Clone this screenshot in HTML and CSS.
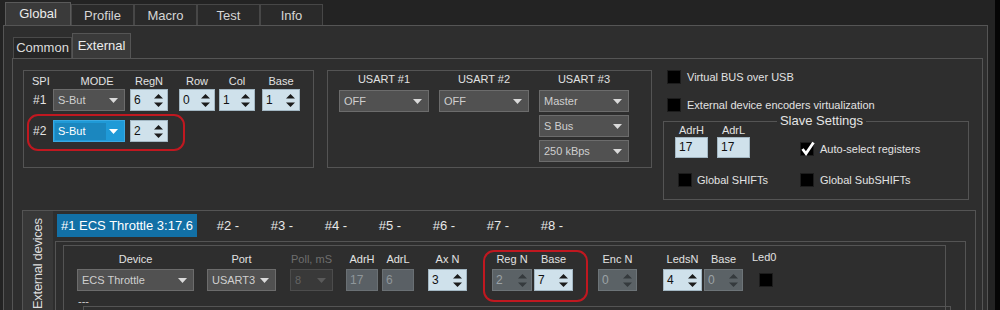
FILE: index.html
```html
<!DOCTYPE html>
<html>
<head>
<meta charset="utf-8">
<title>Global / External</title>
<link rel="stylesheet" href="styles.css">
</head>
<body>
<div class="app">
    <div class="tabs">
        <div class="tab active">Global</div>
        <div class="tab">Profile</div>
        <div class="tab">Macro</div>
        <div class="tab">Test</div>
        <div class="tab">Info</div>
    </div>
    <div class="panel">
        <div class="subtabs">
            <div class="subtab">Common</div>
            <div class="subtab active">External</div>
        </div>
        <div class="subpanel">
            <div class="toprow">
                <div class="boxes">
                    <div class="box spi">
                        <div class="spi-row head">
                            <div class="c-num">SPI</div>
                            <div class="c-mode">MODE</div>
                            <div class="c-reg">RegN</div>
                            <div class="c-row">Row</div>
                            <div class="c-col">Col</div>
                            <div class="c-base">Base</div>
                        </div>
                        <div class="spi-row">
                            <div class="c-num">#1</div>
                            <div class="combo c-mode"><span>S-But</span><svg class="dd" width="9" height="5" viewBox="0 0 9 5"><path d="M0 0h9L4.5 5z"/></svg></div>
                            <div class="spin c-reg"><span>6</span><svg width="9" height="13" viewBox="0 0 9 13"><path d="M0 4.5L4.5 0 9 4.5zM0 8.5h9L4.5 13z"/></svg></div>
                            <div class="spin c-row"><span>0</span><svg width="9" height="13" viewBox="0 0 9 13"><path d="M0 4.5L4.5 0 9 4.5zM0 8.5h9L4.5 13z"/></svg></div>
                            <div class="spin c-col"><span>1</span><svg width="9" height="13" viewBox="0 0 9 13"><path d="M0 4.5L4.5 0 9 4.5zM0 8.5h9L4.5 13z"/></svg></div>
                            <div class="spin c-base"><span>1</span><svg width="9" height="13" viewBox="0 0 9 13"><path d="M0 4.5L4.5 0 9 4.5zM0 8.5h9L4.5 13z"/></svg></div>
                        </div>
                        <div class="spi-row second marked">
                            <div class="c-num">#2</div>
                            <div class="combo blue c-mode"><span class="sel">S-But</span><svg class="dd" width="9" height="5" viewBox="0 0 9 5"><path d="M0 0h9L4.5 5z"/></svg></div>
                            <div class="spin c-reg last"><span>2</span><svg width="9" height="13" viewBox="0 0 9 13"><path d="M0 4.5L4.5 0 9 4.5zM0 8.5h9L4.5 13z"/></svg></div>
                        </div>
                    </div>
                    <div class="box usart">
                        <div class="u-label">USART #1</div>
                        <div class="u-label">USART #2</div>
                        <div class="u-label">USART #3</div>
                        <div class="combo"><span>OFF</span><svg width="9" height="5" viewBox="0 0 9 5"><path d="M0 0h9L4.5 5z"/></svg></div>
                        <div class="combo"><span>OFF</span><svg width="9" height="5" viewBox="0 0 9 5"><path d="M0 0h9L4.5 5z"/></svg></div>
                        <div class="combo"><span>Master</span><svg width="9" height="5" viewBox="0 0 9 5"><path d="M0 0h9L4.5 5z"/></svg></div>
                        <div class="combo u-third"><span>S Bus</span><svg width="9" height="5" viewBox="0 0 9 5"><path d="M0 0h9L4.5 5z"/></svg></div>
                        <div class="combo u-third"><span>250 kBps</span><svg width="9" height="5" viewBox="0 0 9 5"><path d="M0 0h9L4.5 5z"/></svg></div>
                    </div>
                </div>
                <div class="side">
                    <div class="check-row"><div class="chk"></div><span>Virtual BUS over USB</span></div>
                    <div class="check-row second"><div class="chk"></div><span>External device encoders virtualization</span></div>
                    <div class="slave">
                        <div class="slave-title">Slave Settings</div>
                        <div class="slave-grid">
                            <div class="adr">
                                <div class="field narrow">
                                    <div class="f-label">AdrH</div>
                                    <div class="edit">17</div>
                                </div>
                                <div class="field narrow">
                                    <div class="f-label">AdrL</div>
                                    <div class="edit">17</div>
                                </div>
                            </div>
                            <div class="check-row auto">
                                <div class="chk"><svg width="15" height="15" viewBox="0 0 15 15"><path d="M2.5 8L6 12.5 13.5 1.5"/></svg></div>
                                <span>Auto-select registers</span>
                            </div>
                            <div class="check-row shifts"><div class="chk"></div><span>Global SHIFTs</span></div>
                            <div class="check-row subshifts"><div class="chk"></div><span>Global SubSHIFTs</span></div>
                        </div>
                    </div>
                </div>
            </div>

            <div class="devbox">
                <div class="vtab">External devices</div>
                <div class="devmain">
                    <div class="devtabs">
                        <div class="dtab active">#1 ECS Throttle 3:17.6</div>
                        <div class="dtab">#2 -</div>
                        <div class="dtab">#3 -</div>
                        <div class="dtab">#4 -</div>
                        <div class="dtab">#5 -</div>
                        <div class="dtab">#6 -</div>
                        <div class="dtab">#7 -</div>
                        <div class="dtab">#8 -</div>
                    </div>
                    <div class="devpage">
                        <div class="group">
                            <div class="fields">
                                <div class="field w-device">
                                    <div class="f-label">Device</div>
                                    <div class="combo"><span>ECS Throttle</span><svg width="9" height="5" viewBox="0 0 9 5"><path d="M0 0h9L4.5 5z"/></svg></div>
                                </div>
                                <div class="field w-port">
                                    <div class="f-label">Port</div>
                                    <div class="combo"><span>USART3</span><svg width="9" height="5" viewBox="0 0 9 5"><path d="M0 0h9L4.5 5z"/></svg></div>
                                </div>
                                <div class="field w-poll">
                                    <div class="f-label off">Poll, mS</div>
                                    <div class="combo dis"><span>8</span><svg width="9" height="5" viewBox="0 0 9 5"><path d="M0 0h9L4.5 5z"/></svg></div>
                                </div>
                                <div class="field w-adrh">
                                    <div class="f-label">AdrH</div>
                                    <div class="edit dis">17</div>
                                </div>
                                <div class="field w-adrl">
                                    <div class="f-label">AdrL</div>
                                    <div class="edit dis">6</div>
                                </div>
                                <div class="field w-axn">
                                    <div class="f-label">Ax N</div>
                                    <div class="spin"><span>3</span><svg width="9" height="13" viewBox="0 0 9 13"><path d="M0 4.5L4.5 0 9 4.5zM0 8.5h9L4.5 13z"/></svg></div>
                                </div>
                                <div class="pair marked">
                                    <div class="field w-regn">
                                        <div class="f-label">Reg N</div>
                                        <div class="spin dis"><span>2</span><svg width="9" height="13" viewBox="0 0 9 13"><path d="M0 4.5L4.5 0 9 4.5zM0 8.5h9L4.5 13z"/></svg></div>
                                    </div>
                                    <div class="field w-base">
                                        <div class="f-label">Base</div>
                                        <div class="spin"><span>7</span><svg width="9" height="13" viewBox="0 0 9 13"><path d="M0 4.5L4.5 0 9 4.5zM0 8.5h9L4.5 13z"/></svg></div>
                                    </div>
                                </div>
                                <div class="field w-encn">
                                    <div class="f-label">Enc N</div>
                                    <div class="spin dis"><span>0</span><svg width="9" height="13" viewBox="0 0 9 13"><path d="M0 4.5L4.5 0 9 4.5zM0 8.5h9L4.5 13z"/></svg></div>
                                </div>
                                <div class="field w-leds">
                                    <div class="f-label">LedsN</div>
                                    <div class="spin"><span>4</span><svg width="9" height="13" viewBox="0 0 9 13"><path d="M0 4.5L4.5 0 9 4.5zM0 8.5h9L4.5 13z"/></svg></div>
                                </div>
                                <div class="field w-lbase">
                                    <div class="f-label">Base</div>
                                    <div class="spin dis"><span>0</span><svg width="9" height="13" viewBox="0 0 9 13"><path d="M0 4.5L4.5 0 9 4.5zM0 8.5h9L4.5 13z"/></svg></div>
                                </div>
                                <div class="field w-led0">
                                    <div class="f-label led0">Led0</div>
                                    <div class="chk led"></div>
                                </div>
                            </div>
                            <div class="dash">---</div>
                            <div class="subbox"></div>
                        </div>
                    </div>
                </div>
            </div>
        </div>
    </div>
</div>
</body>
</html>
```

FILE: styles.css
```css
html, body {
    margin: 0;
    background: #050505;
}
body {
    font-family: "Liberation Sans", Arial, sans-serif;
    font-size: 11px;
    color: #e2e2e2;
}
.app {
    width: 995px;
    height: 310px;
    overflow: hidden;
    background: #232323;
}

/* main tabs */
.tabs {
    display: flex;
    align-items: flex-end;
    height: 25px;
    padding-left: 5px;
}
.tab {
    width: 63px;
    height: 21px;
    box-sizing: border-box;
    border: 1px solid #474747;
    border-bottom: none;
    background: #2a2a2a;
    color: #d6d6d6;
    font-size: 13px;
    line-height: 21px;
    text-align: center;
}
.tab.active {
    width: 66px;
    height: 23px;
    line-height: 21px;
    border-color: #5a5a5a;
    background: #3a3a3a;
    color: #ececec;
}

.panel {
    margin-left: 3px;
    width: 985px;
    height: 300px;
    box-sizing: border-box;
    border: 1px solid #555;
    background: #2e2e2e;
    padding: 7px 0 0 8px;
}

/* sub tabs */
.subtabs {
    display: flex;
    align-items: flex-end;
    height: 25px;
    padding-left: 1px;
}
.subtab {
    width: 59px;
    height: 21px;
    box-sizing: border-box;
    border: 1px solid #4a4a4a;
    border-bottom: none;
    background: #262626;
    color: #dcdcdc;
    font-size: 13px;
    line-height: 20px;
    text-align: center;
}
.subtab.active {
    height: 25px;
    line-height: 24px;
    background: #3a3a3a;
    border-color: #555;
    color: #ececec;
}

.subpanel {
    width: 971px;
    height: 270px;
    box-sizing: border-box;
    border: 1px solid #555;
    border-bottom: none;
    padding: 11px 0 0 10px;
}

.toprow {
    display: flex;
    align-items: flex-start;
}
.boxes {
    display: flex;
    align-items: stretch;
    margin-right: 11px;
}
.box {
    box-sizing: border-box;
    border: 1px solid #545454;
}

/* SPI */
.spi {
    width: 291px;
    padding-top: 2px;
    margin-right: 13px;
}
.spi-row {
    display: flex;
    align-items: center;
}
.spi-row.head {
    height: 16px;
    line-height: 16px;
}
.spi-row.head > div {
    text-align: center;
}
.spi-row.second {
    margin-top: 9px;
}
.c-num {
    width: 29px;
    padding-left: 9px;
    box-sizing: border-box;
    font-size: 12px;
}
.spi-row.head .c-num {
    text-align: left;
    padding-left: 8px;
    font-size: 11px;
}
.c-mode { width: 72px; margin-right: 5px; box-sizing: border-box; }
.spi-row.head .c-mode { padding-left: 16px; }
.c-reg { width: 38px; margin-right: 11px; }
.c-reg.last { margin-right: 0; }
.c-row { width: 36px; margin-right: 4px; }
.c-col { width: 36px; margin-right: 7px; }
.c-base { width: 38px; }

/* red annotation rings */
.marked {
    position: relative;
    width: max-content;
}
.marked::after {
    content: "";
    position: absolute;
    border: 2px solid #c01820;
    border-radius: 11px;
}
.spi-row.marked::after {
    top: -6px;
    left: 3px;
    right: -17px;
    bottom: -9px;
}
.pair.marked::after {
    top: -1px;
    left: -9px;
    right: -15px;
    bottom: -11px;
}

/* USART */
.usart {
    width: 325px;
    display: grid;
    grid-template-columns: 90px 90px 90px;
    column-gap: 10px;
    row-gap: 3px;
    padding: 1px 0 5px 11px;
    align-content: start;
}
.u-label {
    line-height: 15px;
    text-align: center;
    font-size: 11px;
}
.u-third {
    grid-column: 3;
}

/* inputs */
.combo {
    display: flex;
    align-items: center;
    justify-content: space-between;
    height: 22px;
    box-sizing: border-box;
    border: 1px solid #6c6c6c;
    background: #515151;
    color: #cfcfcf;
    padding: 0 6px 0 4px;
    font-size: 11px;
}
.combo svg { fill: #dadada; }
.combo.blue {
    background: #1f9ad7;
    border-color: #3aa9e2;
    color: #fff;
    padding-left: 1px;
}
.combo.blue svg { fill: #fff; }
.combo .sel {
    width: 51px;
    height: 17px;
    line-height: 17px;
    box-sizing: border-box;
    padding-left: 3px;
    background: #1b87bf;
}
.combo.dis {
    background: #393939;
    border-color: #4c4c4c;
    color: #646464;
}
.combo.dis svg { fill: #5a5a5a; }

.spin {
    display: flex;
    align-items: center;
    justify-content: space-between;
    height: 22px;
    box-sizing: border-box;
    border: 1px solid #a3b7c3;
    background: #cfe1eb;
    color: #111;
    padding: 0 4px 0 3px;
    font-size: 12px;
}
.spin svg { fill: #1c1c1c; }
.spin.dis {
    background: #5b6266;
    border-color: #6d7478;
    color: #9ba2a6;
}
.spin.dis svg { fill: #353a3d; }

.edit {
    height: 21px;
    line-height: 19px;
    box-sizing: border-box;
    border: 1px solid #a3b7c3;
    background: #cfe1eb;
    color: #111;
    padding-left: 3px;
    font-size: 12px;
}
.edit.dis {
    height: 22px;
    line-height: 20px;
    background: #5a6065;
    border-color: #6a7074;
    color: #8f969a;
}

/* checkboxes */
.chk {
    width: 14px;
    height: 14px;
    box-sizing: border-box;
    background: #000;
    border: 1px solid #1c1c1c;
    flex: none;
}
.chk svg {
    display: block;
    margin: -2px 0 0 -1px;
    fill: none;
    stroke: #fff;
    stroke-width: 2.8;
}
.check-row {
    display: flex;
    align-items: center;
    height: 14px;
    font-size: 11px;
}
.check-row span {
    margin-left: 6px;
}

/* right side */
.side {
    width: 306px;
}
.side > .check-row {
    padding-left: 4px;
}
.side > .check-row.second {
    margin-top: 14px;
}
.slave {
    margin-top: 9px;
    box-sizing: border-box;
    border: 1px solid #545454;
    padding: 0 0 12px 11px;
}
.slave-title {
    display: table;
    margin: -9px auto -5px;
    padding: 0 3px;
    background: #2e2e2e;
    font-size: 13px;
    line-height: 16px;
    color: #e4e4e4;
}
.slave-grid {
    display: grid;
    grid-template-columns: 125px auto;
    align-items: end;
}
.adr {
    display: flex;
}
.adr .field + .field {
    margin-left: 9px;
}
.field.narrow {
    width: 33px;
}
.field.narrow .f-label {
    line-height: 13px;
    margin-bottom: 0;
}
.check-row.auto {
    margin-bottom: 2px;
}
.check-row.shifts {
    margin-top: 15px;
    margin-left: 3px;
}
.check-row.shifts span {
    margin-left: 5px;
}
.check-row.subshifts {
    margin-top: 15px;
}

/* external devices */
.devbox {
    display: flex;
    margin-top: 10px;
    margin-left: -1px;
    width: 954px;
    box-sizing: border-box;
    border: 1px solid #545454;
    border-bottom: none;
}
.vtab {
    width: 30px;
    flex: none;
    background: #383838;
    writing-mode: vertical-rl;
    transform: rotate(180deg);
    text-align: end;
    padding-bottom: 7px;
    box-sizing: border-box;
    line-height: 30px;
    font-size: 13px;
    letter-spacing: -0.3px;
    color: #dedede;
}
.devmain {
    flex: 1;
}
.devtabs {
    display: flex;
    height: 30px;
    box-sizing: border-box;
    padding: 3px 0 0 4px;
}
.dtab {
    width: 54px;
    height: 23px;
    line-height: 23px;
    text-align: center;
    font-size: 13px;
    color: #e8e8e8;
}
.dtab.active {
    width: 140px;
    margin-right: 4px;
    background: #1270a6;
    color: #fff;
}
.devpage {
    margin-left: 2px;
    width: 911px;
    box-sizing: border-box;
    border: 1px solid #545454;
    border-bottom: none;
    padding: 3px 0 0 7px;
}
.group {
    width: 883px;
    box-sizing: border-box;
    border: 1px solid #545454;
    padding: 5px 0 0 13px;
}
.fields {
    display: flex;
    align-items: flex-start;
}
.pair {
    display: flex;
}
.field {
    display: flex;
    flex-direction: column;
}
.f-label {
    line-height: 16px;
    margin-bottom: 2px;
    text-align: center;
    white-space: nowrap;
    font-size: 11px;
}
.f-label.off { color: #6e6e6e; }
.f-label.led0 { margin-top: -2px; margin-bottom: 4px; }
.w-device { width: 117px; }
.w-port { width: 69px; margin-left: 13px; }
.w-poll { width: 43px; margin-left: 14px; }
.w-adrh { width: 32px; margin-left: 13px; }
.w-adrl { width: 32px; margin-left: 4px; }
.w-axn { width: 39px; margin-left: 14px; }
.pair { margin-left: 25px; }
.w-regn { width: 40px; }
.w-base { width: 39px; margin-left: 2px; }
.w-encn { width: 39px; margin-left: 25px; }
.w-leds { width: 39px; margin-left: 26px; }
.w-lbase { width: 39px; margin-left: 2px; }
.w-led0 { width: 24px; margin-left: 9px; }
.chk.led {
    margin: 4px 0 0 7px;
}
.dash {
    margin-top: 4px;
    padding-left: 1px;
    line-height: 12px;
    color: #cfcfcf;
}
.subbox {
    margin: -1px 0 0 6px;
    width: 868px;
    height: 20px;
    box-sizing: border-box;
    border: 1px solid #545454;
}
```
